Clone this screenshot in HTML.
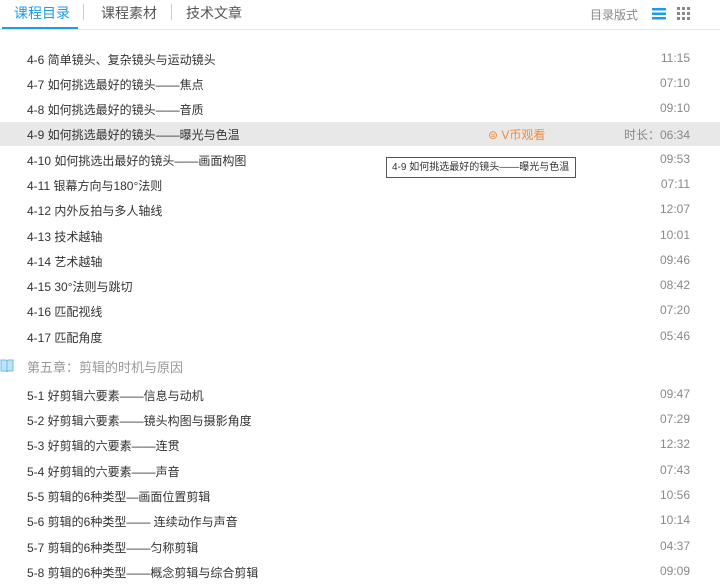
<!DOCTYPE html><html><head><meta charset="utf-8"><style>
body{margin:0;width:720px;height:581px;overflow:hidden;background:#fff;font-family:"Liberation Sans","Noto Sans CJK SC",sans-serif;position:relative}
.tab{position:absolute;top:3px;font-size:14px;color:#555}
.sep{position:absolute;top:4px;width:1px;height:16px;background:#ccc}
.r{position:absolute;left:0;width:720px;height:25px;font-size:12px;color:#333}
.r .t{position:absolute;left:27px;top:1px}
.r .d{position:absolute;right:30px;top:1px;color:#888}
</style></head><body>
<div class="tab" style="left:14px;color:#1e9be8">课程目录</div>
<div style="position:absolute;left:2px;top:27px;width:76px;height:2px;background:#1e9be8"></div>
<div class="sep" style="left:83px"></div>
<div class="tab" style="left:101px">课程素材</div>
<div class="sep" style="left:171px"></div>
<div class="tab" style="left:186px">技术文章</div>
<div style="position:absolute;left:0;top:29px;width:720px;height:1px;background:#e5e5e5"></div>
<div style="position:absolute;left:590px;top:6px;font-size:12px;color:#888">目录版式</div>
<svg style="position:absolute;left:652px;top:8px" width="14" height="12"><rect y="0" width="14" height="2.5" fill="#1e9be8"/><rect y="4.5" width="14" height="2.5" fill="#1e9be8"/><rect y="9" width="14" height="2.5" fill="#1e9be8"/></svg>
<svg style="position:absolute;left:677px;top:7px" width="13" height="13" fill="#888"><rect x="0" y="0" width="3" height="3"/><rect x="5" y="0" width="3" height="3"/><rect x="10" y="0" width="3" height="3"/><rect x="0" y="5" width="3" height="3"/><rect x="5" y="5" width="3" height="3"/><rect x="10" y="5" width="3" height="3"/><rect x="0" y="10" width="3" height="3"/><rect x="5" y="10" width="3" height="3"/><rect x="10" y="10" width="3" height="3"/></svg>

<div class="r" style="top:50px"><span class="t">4-6 简单镜头、复杂镜头与运动镜头</span><span class="d">11:15</span></div>
<div class="r" style="top:75px"><span class="t">4-7 如何挑选最好的镜头——焦点</span><span class="d">07:10</span></div>
<div class="r" style="top:100px"><span class="t">4-8 如何挑选最好的镜头——音质</span><span class="d">09:10</span></div>
<div class="r" style="top:122px;background:#e8e8e8;height:24px"><span class="t" style="top:4px">4-9 如何挑选最好的镜头——曝光与色温</span><span style="position:absolute;left:488px;top:4px;color:#f08a3c">⊜ V币观看</span><span class="d" style="top:4px">时长：06:34</span></div>
<div class="r" style="top:151px"><span class="t">4-10 如何挑选出最好的镜头——画面构图</span><span class="d">09:53</span></div>
<div class="r" style="top:176px"><span class="t">4-11 银幕方向与180°法则</span><span class="d">07:11</span></div>
<div class="r" style="top:201px"><span class="t">4-12 内外反拍与多人轴线</span><span class="d">12:07</span></div>
<div class="r" style="top:227px"><span class="t">4-13 技术越轴</span><span class="d">10:01</span></div>
<div class="r" style="top:252px"><span class="t">4-14 艺术越轴</span><span class="d">09:46</span></div>
<div class="r" style="top:277px"><span class="t">4-15 30°法则与跳切</span><span class="d">08:42</span></div>
<div class="r" style="top:302px"><span class="t">4-16 匹配视线</span><span class="d">07:20</span></div>
<div class="r" style="top:328px"><span class="t">4-17 匹配角度</span><span class="d">05:46</span></div>
<svg style="position:absolute;left:0;top:359px" width="14" height="13"><path d="M1 1h5l1 1 1-1h5v11H8l-1 1-1-1H1z" fill="#bfe3f8" stroke="#6cbde9"/><path d="M7 2v10" stroke="#6cbde9"/></svg>
<div style="position:absolute;left:27px;top:357px;font-size:13px;color:#999">第五章：剪辑的时机与原因</div>
<div class="r" style="top:386px"><span class="t">5-1 好剪辑六要素——信息与动机</span><span class="d">09:47</span></div>
<div class="r" style="top:411px"><span class="t">5-2 好剪辑六要素——镜头构图与摄影角度</span><span class="d">07:29</span></div>
<div class="r" style="top:436px"><span class="t">5-3 好剪辑的六要素——连贯</span><span class="d">12:32</span></div>
<div class="r" style="top:462px"><span class="t">5-4 好剪辑的六要素——声音</span><span class="d">07:43</span></div>
<div class="r" style="top:487px"><span class="t">5-5 剪辑的6种类型—画面位置剪辑</span><span class="d">10:56</span></div>
<div class="r" style="top:512px"><span class="t">5-6 剪辑的6种类型—— 连续动作与声音</span><span class="d">10:14</span></div>
<div class="r" style="top:538px"><span class="t">5-7 剪辑的6种类型——匀称剪辑</span><span class="d">04:37</span></div>
<div class="r" style="top:563px"><span class="t">5-8 剪辑的6种类型——概念剪辑与综合剪辑</span><span class="d">09:09</span></div>

<div style="position:absolute;left:386px;top:157px;width:183px;height:19px;border:1px solid #555;background:#fff;font-size:10px;line-height:19px;color:#333;padding-left:5px;box-sizing:content-box;white-space:nowrap;overflow:hidden">4-9 如何挑选最好的镜头——曝光与色温</div>
</body></html>
